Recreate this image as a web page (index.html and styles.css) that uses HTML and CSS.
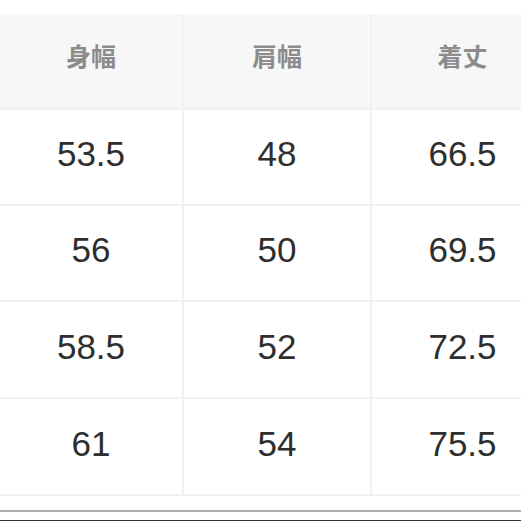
FILE: index.html
```html
<!DOCTYPE html>
<html lang="ja">
<head>
<meta charset="utf-8">
<link rel="stylesheet" href="styles.css">
</head>
<body>
<div class="page">
  <div class="size-table">
    <div class="cell head">身幅</div>
    <div class="cell head">肩幅</div>
    <div class="cell head">着丈</div>
    <div class="cell">53.5</div>
    <div class="cell">48</div>
    <div class="cell">66.5</div>
    <div class="cell">56</div>
    <div class="cell">50</div>
    <div class="cell">69.5</div>
    <div class="cell">58.5</div>
    <div class="cell">52</div>
    <div class="cell">72.5</div>
    <div class="cell">61</div>
    <div class="cell">54</div>
    <div class="cell">75.5</div>
  </div>
  <div class="rule-gray"></div>
  <div class="rule-dark"></div>
</div>
</body>
</html>
```
FILE: styles.css
```css
html, body {
  margin: 0;
  padding: 0;
  background: #ffffff;
  overflow: hidden;
}
.page {
  width: 521px;
  height: 521px;
  overflow: hidden;
  padding-top: 14px;
  box-sizing: border-box;
}
.size-table {
  display: grid;
  grid-template-columns: 182px 186px 181px;
  grid-template-rows: 94px 94px 94px 95px 95px;
  gap: 2px;
  background: #f1f1f1;
  padding-bottom: 2px;
  width: 553px;
}
.cell {
  background: #ffffff;
  display: flex;
  align-items: center;
  justify-content: center;
  font-family: "Liberation Sans", Arial, sans-serif;
  font-size: 35px;
  color: #2e2e2e;
  padding-bottom: 6px;
  box-sizing: border-box;
}
.cell.head {
  background: #f7f7f7;
  font-family: "Noto Sans CJK JP", "Noto Sans", sans-serif;
  font-weight: 700;
  font-size: 25px;
  line-height: 1;
  color: #8c8c8c;
  padding-bottom: 12px;
}
.rule-gray {
  margin-top: 14px;
  height: 2px;
  background: #b0b0b0;
}
.rule-dark {
  margin-top: 8px;
  height: 2px;
  background: #333333;
}
```
